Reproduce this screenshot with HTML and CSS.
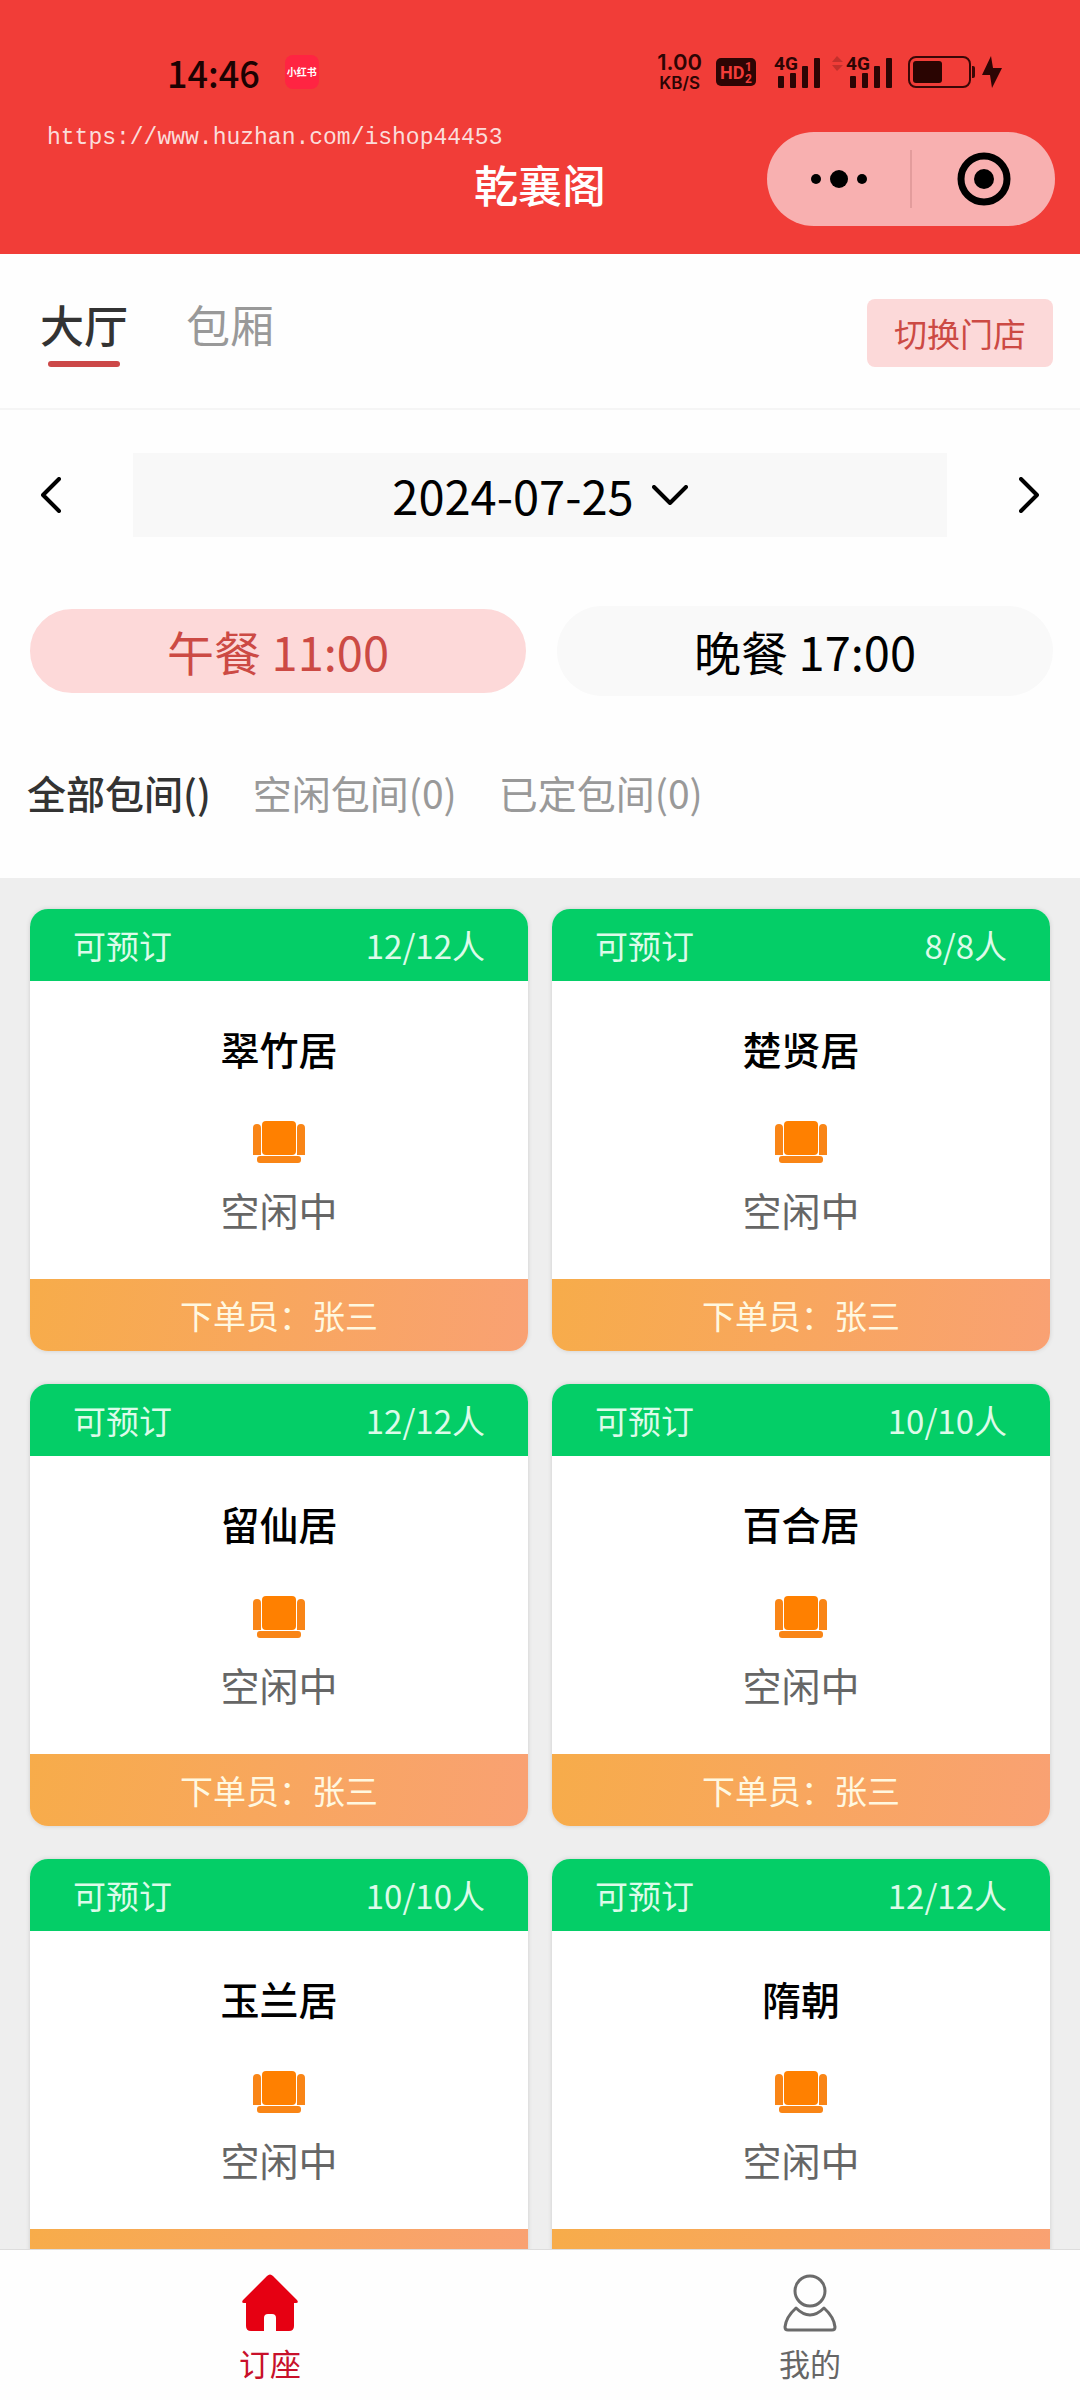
FILE: index.html
```html
<!DOCTYPE html>
<html lang="zh-CN">
<head>
	<meta charset="utf-8">
	<meta name="viewport" content="width=device-width, initial-scale=1">
	<title>乾襄阁</title>
	<link rel="stylesheet" href="styles.css">
</head>
<body>

	<!-- shared icons -->
	<svg class="sprite" aria-hidden="true">
		<symbol id="seat" viewBox="0 0 52 42">
			<rect x="9" y="0" width="34" height="34" rx="4" fill="#ff8000"/>
			<path d="M0 34V7a4 4 0 0 1 8 0v27zM44 34V7a4 4 0 0 1 8 0v27z" fill="#f98516"/>
			<rect x="4" y="35" width="44" height="7" rx="3" fill="#f98516"/>
		</symbol>
		<symbol id="signal" viewBox="0 0 48 34">
			<rect x="4" y="21" width="6" height="12" rx="1"/>
			<rect x="16" y="18" width="6" height="15" rx="1"/>
			<rect x="28" y="11" width="6" height="22" rx="1"/>
			<rect x="40" y="3" width="6" height="30" rx="1"/>
		</symbol>
	</svg>

	<div class="app">
		<header class="header">
			<div class="status">
				<span class="time">14:46</span>
				<span class="app_badge">小红书</span>
				<div class="status_right">
					<div class="speed"><b>1.00</b><span>KB/S</span></div>
					<svg class="hd" width="40" height="28" viewBox="0 0 40 28">
						<rect width="40" height="28" rx="5" fill="#2d0504"/>
						<text x="4" y="21" class="hd_text">HD</text>
						<text x="29" y="13" class="hd_num">1</text>
						<text x="29" y="25" class="hd_num">2</text>
					</svg>
					<svg class="signal" width="48" height="34">
						<use href="#signal"/>
						<text x="0" y="15" class="signal_text">4G</text>
					</svg>
					<svg class="traffic" width="11" height="34" viewBox="0 0 11 34">
						<path d="M0 7l5-6 6 6zM0 10h11l-6 6z" fill="#c4302c"/>
					</svg>
					<svg class="signal" width="48" height="34">
						<use href="#signal"/>
						<text x="0" y="15" class="signal_text">4G</text>
					</svg>
					<svg class="battery" width="68" height="32" viewBox="0 0 68 32">
						<rect x="1" y="1" width="61" height="30" rx="7" fill="none" stroke="#3a0706" stroke-width="2"/>
						<rect x="5" y="5" width="29" height="22" rx="3" fill="#2a0502"/>
						<path d="M64 10h1q2 0 2 2v8q0 2-2 2h-1z" fill="#3a0706"/>
					</svg>
					<svg class="bolt" width="20" height="32" viewBox="0 0 20 32">
						<path d="M9 0L0 19h8l2 13L20 12h-9z" fill="#2d0504"/>
					</svg>
				</div>
			</div>
			<div class="nav">
				<h1 class="title">乾襄阁</h1>
				<div class="capsule">
					<button aria-label="更多">
						<svg width="58" height="20" viewBox="0 0 58 20">
							<circle cx="6" cy="10" r="5"/><circle cx="29" cy="10" r="9"/><circle cx="52" cy="10" r="5"/>
						</svg>
					</button>
					<button aria-label="关闭">
						<svg width="54" height="54" viewBox="0 0 54 54">
							<circle cx="27" cy="27" r="23" fill="none" stroke="#000" stroke-width="7"/><circle cx="27" cy="27" r="10"/>
						</svg>
					</button>
				</div>
			</div>
			<span class="watermark">https://www.huzhan.com/ishop44453</span>
		</header>

		<div class="area_bar">
			<button class="area active">大厅</button>
			<button class="area">包厢</button>
			<button class="switch_btn">切换门店</button>
		</div>

		<div class="filters">
			<div class="date_row">
				<button class="arrow" aria-label="前一天">
					<svg width="20" height="36" viewBox="0 0 20 36"><path d="M18 2L2 18l16 16"/></svg>
				</button>
				<button class="date">2024-07-25
					<svg width="36" height="20" viewBox="0 0 36 20"><path d="M2 2l16 16L34 2"/></svg>
				</button>
				<button class="arrow" aria-label="后一天">
					<svg width="20" height="36" viewBox="0 0 20 36"><path d="M2 2l16 16L2 34"/></svg>
				</button>
			</div>
			<div class="meals">
				<button class="meal active">午餐 11:00</button>
				<button class="meal">晚餐 17:00</button>
			</div>
			<div class="states">
				<button class="state active">全部包间()</button>
				<button class="state">空闲包间(0)</button>
				<button class="state">已定包间(0)</button>
			</div>
		</div>

		<main class="rooms">
			<div class="room">
				<div class="room_head"><span>可预订</span><span>12/12人</span></div>
				<div class="room_body">
					<h2>翠竹居</h2>
					<svg class="seat"><use href="#seat"/></svg>
					<p>空闲中</p>
				</div>
				<div class="room_foot">下单员：张三</div>
			</div>
			<div class="room">
				<div class="room_head"><span>可预订</span><span>8/8人</span></div>
				<div class="room_body">
					<h2>楚贤居</h2>
					<svg class="seat"><use href="#seat"/></svg>
					<p>空闲中</p>
				</div>
				<div class="room_foot">下单员：张三</div>
			</div>
			<div class="room">
				<div class="room_head"><span>可预订</span><span>12/12人</span></div>
				<div class="room_body">
					<h2>留仙居</h2>
					<svg class="seat"><use href="#seat"/></svg>
					<p>空闲中</p>
				</div>
				<div class="room_foot">下单员：张三</div>
			</div>
			<div class="room">
				<div class="room_head"><span>可预订</span><span>10/10人</span></div>
				<div class="room_body">
					<h2>百合居</h2>
					<svg class="seat"><use href="#seat"/></svg>
					<p>空闲中</p>
				</div>
				<div class="room_foot">下单员：张三</div>
			</div>
			<div class="room">
				<div class="room_head"><span>可预订</span><span>10/10人</span></div>
				<div class="room_body">
					<h2>玉兰居</h2>
					<svg class="seat"><use href="#seat"/></svg>
					<p>空闲中</p>
				</div>
				<div class="room_foot"></div>
			</div>
			<div class="room">
				<div class="room_head"><span>可预订</span><span>12/12人</span></div>
				<div class="room_body">
					<h2>隋朝</h2>
					<svg class="seat"><use href="#seat"/></svg>
					<p>空闲中</p>
				</div>
				<div class="room_foot"></div>
			</div>
		</main>

		<nav class="tabbar">
			<a href="#" class="tab active">
				<svg width="56" height="58" viewBox="0 0 56 58">
					<path d="M25 2q3-3 6 0l24 24q2 3-1 3h-2v23q0 5-5 5H34V44q0-4-4-4h-4q-4 0-4 4v13H9q-5 0-5-5V29H2q-3 0-1-3z" fill="#e60012"/>
				</svg>
				<span>订座</span>
			</a>
			<a href="#" class="tab">
				<svg width="56" height="58" viewBox="0 0 56 58" fill="none" stroke="#6b6b6b" stroke-width="3" stroke-linejoin="round">
					<circle cx="28" cy="17" r="15"/>
					<path d="M14 34Q4 43 3 53q0 3 3 3h44q3 0 3-3Q52 43 42 34q-14 14-28 0z"/>
				</svg>
				<span>我的</span>
			</a>
		</nav>
	</div>

</body>
</html>
```
FILE: styles.css
```css
* {
	box-sizing: border-box;
}
body {
	margin: 0;
	font-family: "Noto Sans CJK SC", sans-serif;
	color: #000;
	background: #fefefe;
}
button {
	border: none;
	padding: 0;
	background: none;
	font: inherit;
	color: inherit;
	cursor: pointer;
}
h1, h2, p {
	margin: 0;
	font-weight: 400;
}
svg {
	display: block;
	flex: none;
}
.sprite {
	display: none;
}
.app {
	display: flex;
	flex-direction: column;
	height: 100vh;
}

/* header */
.header {
	position: relative;
	flex: none;
	padding: 48px 25px 28px;
	background: #f13d38;
}
.status {
	display: flex;
	align-items: center;
	height: 48px;
	padding: 0 53px 0 142px;
}
.time {
	font-size: 36px;
	font-weight: 500;
	line-height: 48px;
	color: #1c0202;
}
.app_badge {
	width: 34px;
	margin-left: 25px;
	border-radius: 8px;
	background: #ff2442;
	color: #fff;
	font-size: 10px;
	font-weight: 700;
	line-height: 34px;
	text-align: center;
}
.status_right {
	display: flex;
	align-items: center;
	margin-left: auto;
	color: #2d0504;
}
.speed {
	display: flex;
	flex-direction: column;
	align-items: center;
	font-family: Inter, sans-serif;
	font-size: 17px;
	font-weight: 600;
	line-height: 20px;
}
.speed b {
	font-size: 22px;
	font-weight: 600;
	line-height: 22px;
}
.hd {
	margin-left: 14px;
}
.hd_text, .hd_num {
	fill: #f23d39;
	font-family: Roboto, sans-serif;
	font-size: 18px;
	font-weight: 700;
}
.hd_num {
	font-size: 12px;
}
.signal {
	margin-left: 18px;
	fill: #2d0504;
}
.signal_text {
	font-family: Roboto, sans-serif;
	font-size: 19px;
	font-weight: 700;
}
.traffic {
	margin-left: 10px;
}
.traffic + .signal {
	margin-left: 3px;
}
.battery {
	margin-left: 14px;
}
.bolt {
	margin-left: 6px;
}
.nav {
	display: grid;
	grid-template-columns: 1fr auto 1fr;
	height: 130px;
	padding-top: 36px;
}
.title {
	grid-column: 2;
	font-size: 44px;
	font-weight: 500;
	line-height: 104px;
	color: #fff;
}
.capsule {
	display: flex;
	justify-self: end;
	width: 288px;
	height: 94px;
	padding: 18px 0;
	border-radius: 47px;
	background: #f8b0b0;
}
.capsule button {
	display: flex;
	flex: 1;
	align-items: center;
	justify-content: center;
}
.capsule button + button {
	border-left: 2px solid #e39c9c;
}
.watermark {
	position: absolute;
	top: 123px;
	left: 47px;
	font-family: "Liberation Mono", monospace;
	font-size: 23px;
	line-height: 30px;
	color: #fbdcda;
}

/* hall / private room */
.area_bar {
	display: flex;
	flex: none;
	align-items: center;
	gap: 58px;
	padding: 38px 27px 34px 40px;
	border-bottom: 2px solid #f5f5f5;
}
.area {
	position: relative;
	padding-bottom: 18px;
	font-size: 44px;
	line-height: 64px;
	color: #999;
}
.area.active {
	font-weight: 500;
	color: #333;
}
.area.active::after {
	content: "";
	position: absolute;
	right: 8px;
	bottom: 7px;
	left: 8px;
	height: 6px;
	border-radius: 3px;
	background: #cc4848;
}
.switch_btn {
	margin-left: auto;
	padding: 0 27px;
	border-radius: 8px;
	background: #fcd9d9;
	font-size: 33px;
	line-height: 68px;
	color: #cc4a44;
}

/* date, meal and state filters */
.filters {
	flex: none;
	padding: 43px 27px 58px;
}
.date_row {
	display: flex;
	align-items: center;
	justify-content: space-between;
	padding: 0 14px;
}
.date_row path {
	fill: none;
	stroke: #000;
	stroke-width: 4;
	stroke-linecap: round;
	stroke-linejoin: round;
}
.arrow {
	padding: 24px 0;
}
.date {
	display: flex;
	flex: 1;
	align-items: center;
	justify-content: center;
	gap: 18px;
	margin: 0 72px;
	background: #f8f8f8;
	font-size: 47px;
	line-height: 84px;
}
.meals {
	display: flex;
	align-items: center;
	gap: 28px;
	margin-top: 69px;
}
.meal {
	flex: 1;
	border-radius: 45px;
	background: #f9f9f9;
	font-size: 47px;
	line-height: 90px;
}
.meal.active {
	border: 3px solid #fefefe;
	background: #fdd9d9;
	line-height: 84px;
	color: #cc4a44;
}
.states {
	display: flex;
	gap: 42px;
	margin-top: 68px;
}
.state {
	font-size: 39px;
	line-height: 56px;
	color: #999;
}
.state.active {
	font-weight: 500;
	color: #333;
}

/* room cards */
.rooms {
	display: grid;
	flex: 1;
	grid-template-columns: 1fr 1fr;
	grid-auto-rows: max-content;
	gap: 33px 24px;
	min-height: 0;
	padding: 31px 30px;
	overflow-y: auto;
	scrollbar-width: none;
	background: #eee;
}
.room {
	overflow: hidden;
	border-radius: 18px;
	background: #fff;
	box-shadow: 0 0 4px #ccc;
	text-align: center;
}
.room_head {
	display: flex;
	justify-content: space-between;
	padding: 0 43px;
	background: #04ce67;
	font-size: 33px;
	line-height: 72px;
	color: #dcfbe9;
}
.room_body {
	display: flex;
	flex-direction: column;
	align-items: center;
	padding: 39px 0 42px;
	font-size: 39px;
	line-height: 56px;
	color: #666;
}
.room_body h2 {
	font-size: 39px;
	font-weight: 500;
	color: #000;
}
.seat {
	width: 52px;
	height: 42px;
	margin: 45px 0 18px;
}
.room_foot {
	min-height: 72px;
	background: linear-gradient(100deg, #f7ac4a, #f9a173);
	font-size: 33px;
	line-height: 72px;
	color: #fff8e0;
}

/* bottom tabs */
.tabbar {
	display: flex;
	flex: none;
	border-top: 1px solid #ddd;
	background: #fefefe;
}
.tab {
	display: flex;
	flex: 1;
	flex-direction: column;
	align-items: center;
	padding: 24px 0 17px;
	font-size: 31px;
	line-height: 40px;
	color: #666;
	text-decoration: none;
}
.tab span {
	margin-top: 11px;
}
.tab.active {
	color: #c8102a;
}
```
